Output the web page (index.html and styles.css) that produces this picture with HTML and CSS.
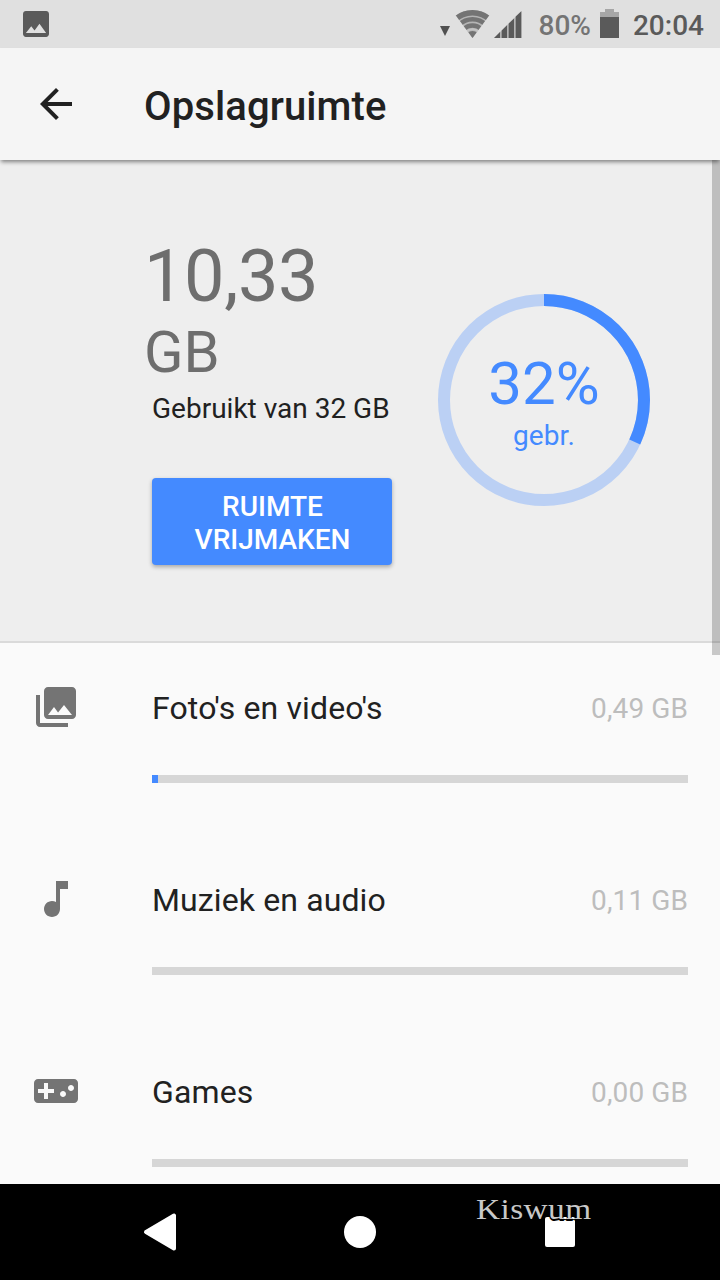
FILE: index.html
```html
<!DOCTYPE html>
<html lang="nl">
<head>
    <meta charset="UTF-8">
    <meta name="viewport" content="width=device-width, initial-scale=1">
    <title>Opslagruimte</title>
    <link rel="stylesheet" href="styles.css">
</head>
<body>

<div class="status">
    <svg class="notif" width="26" height="26" viewBox="3 3 18 18"><path d="M21 19V5c0-1.100-.9-2-2-2H5c-1.100 0-2 .9-2 2v14c0 1.100.9 2 2 2h14c1.100 0 2-.9 2-2zM5 18.200l3.700-4.700 2.300 3 3.400-4.600L19 18.200z"/></svg>
    <svg class="signals" width="84" height="32" viewBox="0 0 84 32">
        <path d="M2 18h10l-5 10z" fill="#505050"/>
        <clipPath id="fan"><path d="M34.500 30L17.500 7C25-.5 44-.5 51.500 7z"/></clipPath>
        <g clip-path="url(#fan)">
            <circle cx="34.500" cy="30" r="28" fill="#b4b4b4"/>
            <g fill="none" stroke="#747474">
                <circle cx="34.500" cy="30" r="25.300" stroke-width="5.400"/>
                <circle cx="34.500" cy="30" r="18.800" stroke-width="4.600"/>
                <circle cx="34.500" cy="30" r="12.500" stroke-width="4.400"/>
            </g>
            <circle cx="34.500" cy="30" r="7" fill="#747474"/>
            <circle cx="34.500" cy="30" r="8.800" fill="none" stroke="#c4c4c4" stroke-width="2"/>
        </g>
        <path d="M56 30h27.500V3z" fill="#b4b4b4"/>
        <path d="M56 30h6v-6zM63.700 30H69V17.200l-5.300 5.200zM70.700 30H76V10.400l-5.300 5.200zM77.700 30h5.600V3.200l-5.600 5.400z" fill="#5a5a5a"/>
    </svg>
    <span class="percent">80%</span>
    <svg class="battery" width="19" height="29" viewBox="0 0 19 29">
        <path d="M5 0h9v3h5v6H0V3h5z" fill="#a6a6a6"/>
        <path d="M0 8h19v21H0z" fill="#5a5a5a"/>
    </svg>
    <span class="clock">20:04</span>
</div>

<header class="toolbar">
    <svg width="32" height="32" viewBox="4 4 16 16"><path d="M20 11H7.830l5.590-5.590L12 4l-8 8 8 8 1.410-1.410L7.830 13H20v-2z"/></svg>
    <h1>Opslagruimte</h1>
</header>

<main class="content">
    <section class="summary">
        <div class="used">
            <div class="amount">10,33</div>
            <div class="unit">GB</div>
            <div class="total">Gebruikt van 32 GB</div>
            <button class="free">RUIMTE VRIJMAKEN</button>
        </div>
        <div class="donut">
            <svg width="212" height="212" viewBox="0 0 212 212">
                <circle class="ring" cx="106" cy="106" r="100"/>
                <circle class="arc" cx="106" cy="106" r="100" pathLength="1000" stroke-dasharray="319 681" transform="rotate(-90 106 106)"/>
            </svg>
            <div class="donut-label">
                <span class="donut-value">32%</span>
                <span class="donut-text">gebr.</span>
            </div>
        </div>
    </section>

    <section class="list">
        <div class="row">
            <svg class="icon" width="48" height="48" viewBox="0 0 24 24"><path d="M22 16V4c0-1.100-.9-2-2-2H8c-1.100 0-2 .9-2 2v12c0 1.100.9 2 2 2h12c1.100 0 2-.9 2-2zm-11-4l2.030 2.710L16 11l4 5H8l3-4zM2 6v14c0 1.100.9 2 2 2h14v-2H4V6H2z"/></svg>
            <div class="name">Foto's en video's</div>
            <div class="size">0,49 GB</div>
            <div class="bar"><div class="fill" style="width:6px"></div></div>
        </div>
        <div class="row">
            <svg class="icon" width="48" height="48" viewBox="0 0 24 24"><path d="M12 3v10.550c-.59-.34-1.270-.55-2-.55-2.210 0-4 1.790-4 4s1.790 4 4 4 4-1.790 4-4V7h4V3h-6z"/></svg>
            <div class="name">Muziek en audio</div>
            <div class="size">0,11 GB</div>
            <div class="bar"></div>
        </div>
        <div class="row">
            <svg class="icon" width="48" height="48" viewBox="0 0 24 24"><path d="M21 6H3c-1.100 0-2 .9-2 2v8c0 1.100.9 2 2 2h18c1.100 0 2-.9 2-2V8c0-1.100-.9-2-2-2zm-10 7H8v3H6v-3H3v-2h3V8h2v3h3v2zm4.500 2c-.83 0-1.500-.67-1.500-1.500s.67-1.500 1.500-1.500 1.500.67 1.500 1.500-.67 1.500-1.500 1.500zm4-3c-.83 0-1.500-.67-1.500-1.500S18.670 9 19.500 9s1.500.67 1.500 1.500-.67 1.500-1.500 1.500z"/></svg>
            <div class="name">Games</div>
            <div class="size">0,00 GB</div>
            <div class="bar"></div>
        </div>
    </section>
    <div class="scrollbar"></div>
</main>

<nav class="navbar">
    <svg width="34" height="40" viewBox="0 0 34 40"><path d="M3 20L31 3.500v33z" fill="#fff" stroke="#fff" stroke-width="4" stroke-linejoin="round"/></svg>
    <div class="home"></div>
    <div class="recent"></div>
    <span class="watermark">Kiswum</span>
</nav>

</body>
</html>
```
FILE: styles.css
```css
* {
    box-sizing: border-box;
}

body {
    margin: 0;
    width: 720px;
    height: 1280px;
    display: flex;
    flex-direction: column;
    overflow: hidden;
    background: #fafafa;
    color: #212121;
    font-family: Roboto, sans-serif;
}

svg {
    display: block;
    flex: none;
}

/* status bar */
.status {
    flex: none;
    display: flex;
    align-items: center;
    height: 48px;
    padding: 0 16px 0 23px;
    background: #e0e0e0;
    font-size: 28px;
    font-weight: 500;
    line-height: 48px;
}
.notif {
    fill: #5a5a5a;
}
.signals {
    margin-left: auto;
}
.percent {
    margin: 3px 9px 0 17px;
    color: #747474;
}
.battery {
    margin-top: -1px;
}
.clock {
    margin: 3px 0 0 14px;
    color: #5a5a5a;
}

/* toolbar */
.toolbar {
    flex: none;
    position: relative;
    z-index: 1;
    display: flex;
    align-items: center;
    gap: 72px;
    height: 112px;
    padding-left: 40px;
    background: #f5f5f5;
    box-shadow: 0 3px 4px -1px rgba(0, 0, 0, .45);
}
.toolbar svg {
    fill: #212121;
}
h1 {
    margin: 4px 0 0;
    font-size: 40px;
    font-weight: 500;
    letter-spacing: .1px;
}

.content {
    position: relative;
    flex: 1;
    overflow: hidden;
}
.scrollbar {
    position: absolute;
    top: 0;
    right: 0;
    width: 8px;
    height: 495px;
    background: rgba(0, 0, 0, .2);
}

/* summary */
.summary {
    display: flex;
    height: 483px;
    padding: 75px 70px 0 144px;
    background: #eee;
    border-bottom: 2px solid #dadada;
}
.used {
    width: 294px;
}
.amount {
    height: 83px;
    color: #6e6e6e;
    font-size: 72px;
    line-height: 84px;
    letter-spacing: -.4px;
}
.unit {
    height: 69px;
    color: #6e6e6e;
    font-size: 58px;
    line-height: 68px;
}
.total {
    height: 44px;
    padding-left: 8px;
    font-size: 28px;
    line-height: 44px;
    white-space: nowrap;
}
.free {
    display: block;
    width: 240px;
    height: 87px;
    margin: 47px 0 0 8px;
    padding: 2px 31px 0 32px;
    border: 0;
    border-radius: 4px;
    background: #448aff;
    box-shadow: 0 2px 4px rgba(0, 0, 0, .3);
    color: #fff;
    font: 500 28px/33px Roboto, sans-serif;
}
.donut {
    display: grid;
    width: 212px;
    height: 212px;
    margin-top: 59px;
}
.donut > * {
    grid-area: 1 / 1;
}
.donut circle {
    fill: none;
    stroke-width: 12;
}
.ring {
    stroke: #bbd0f4;
}
.arc {
    stroke: #448aff;
}
.donut-label {
    display: flex;
    flex-direction: column;
    align-items: center;
    padding-top: 55px;
    color: #448aff;
}
.donut-value {
    font-size: 60px;
    line-height: 70px;
}
.donut-text {
    font-size: 28px;
    line-height: 34px;
    letter-spacing: .1px;
}

/* categories */
.row {
    display: grid;
    grid-template-columns: 120px 1fr auto;
    grid-template-rows: 132px 8px;
    height: 192px;
    padding: 0 32px;
    align-items: center;
}
.icon {
    margin-bottom: 4px;
    fill: #747474;
}
.name {
    margin-bottom: 2px;
    font-size: 32px;
    letter-spacing: .12px;
}
.size {
    margin-bottom: 2px;
    color: #bdbdbd;
    font-size: 28px;
    letter-spacing: .1px;
}
.bar {
    grid-column: 2 / 4;
    height: 8px;
    background: #d6d6d6;
}
.fill {
    height: 8px;
    background: #448aff;
}

/* navigation bar */
.navbar {
    flex: none;
    position: relative;
    display: flex;
    align-items: center;
    height: 96px;
    padding-left: 143px;
    background: #000;
}
.home {
    width: 32px;
    height: 32px;
    margin-left: 167px;
    border-radius: 50%;
    background: #fff;
}
.recent {
    width: 30px;
    height: 30px;
    margin-left: 169px;
    border-radius: 2px;
    background: #fff;
}
.watermark {
    position: absolute;
    left: 476px;
    top: 7px;
    color: #c8c8c8;
    font-family: "Liberation Serif", serif;
    font-size: 30px;
    line-height: 36px;
    letter-spacing: .4px;
    text-shadow: 0 1px #000, 1px 1px #000, -1px 1px #000, 0 2px #000;
    transform: scaleX(1.11);
    transform-origin: left;
}
```
